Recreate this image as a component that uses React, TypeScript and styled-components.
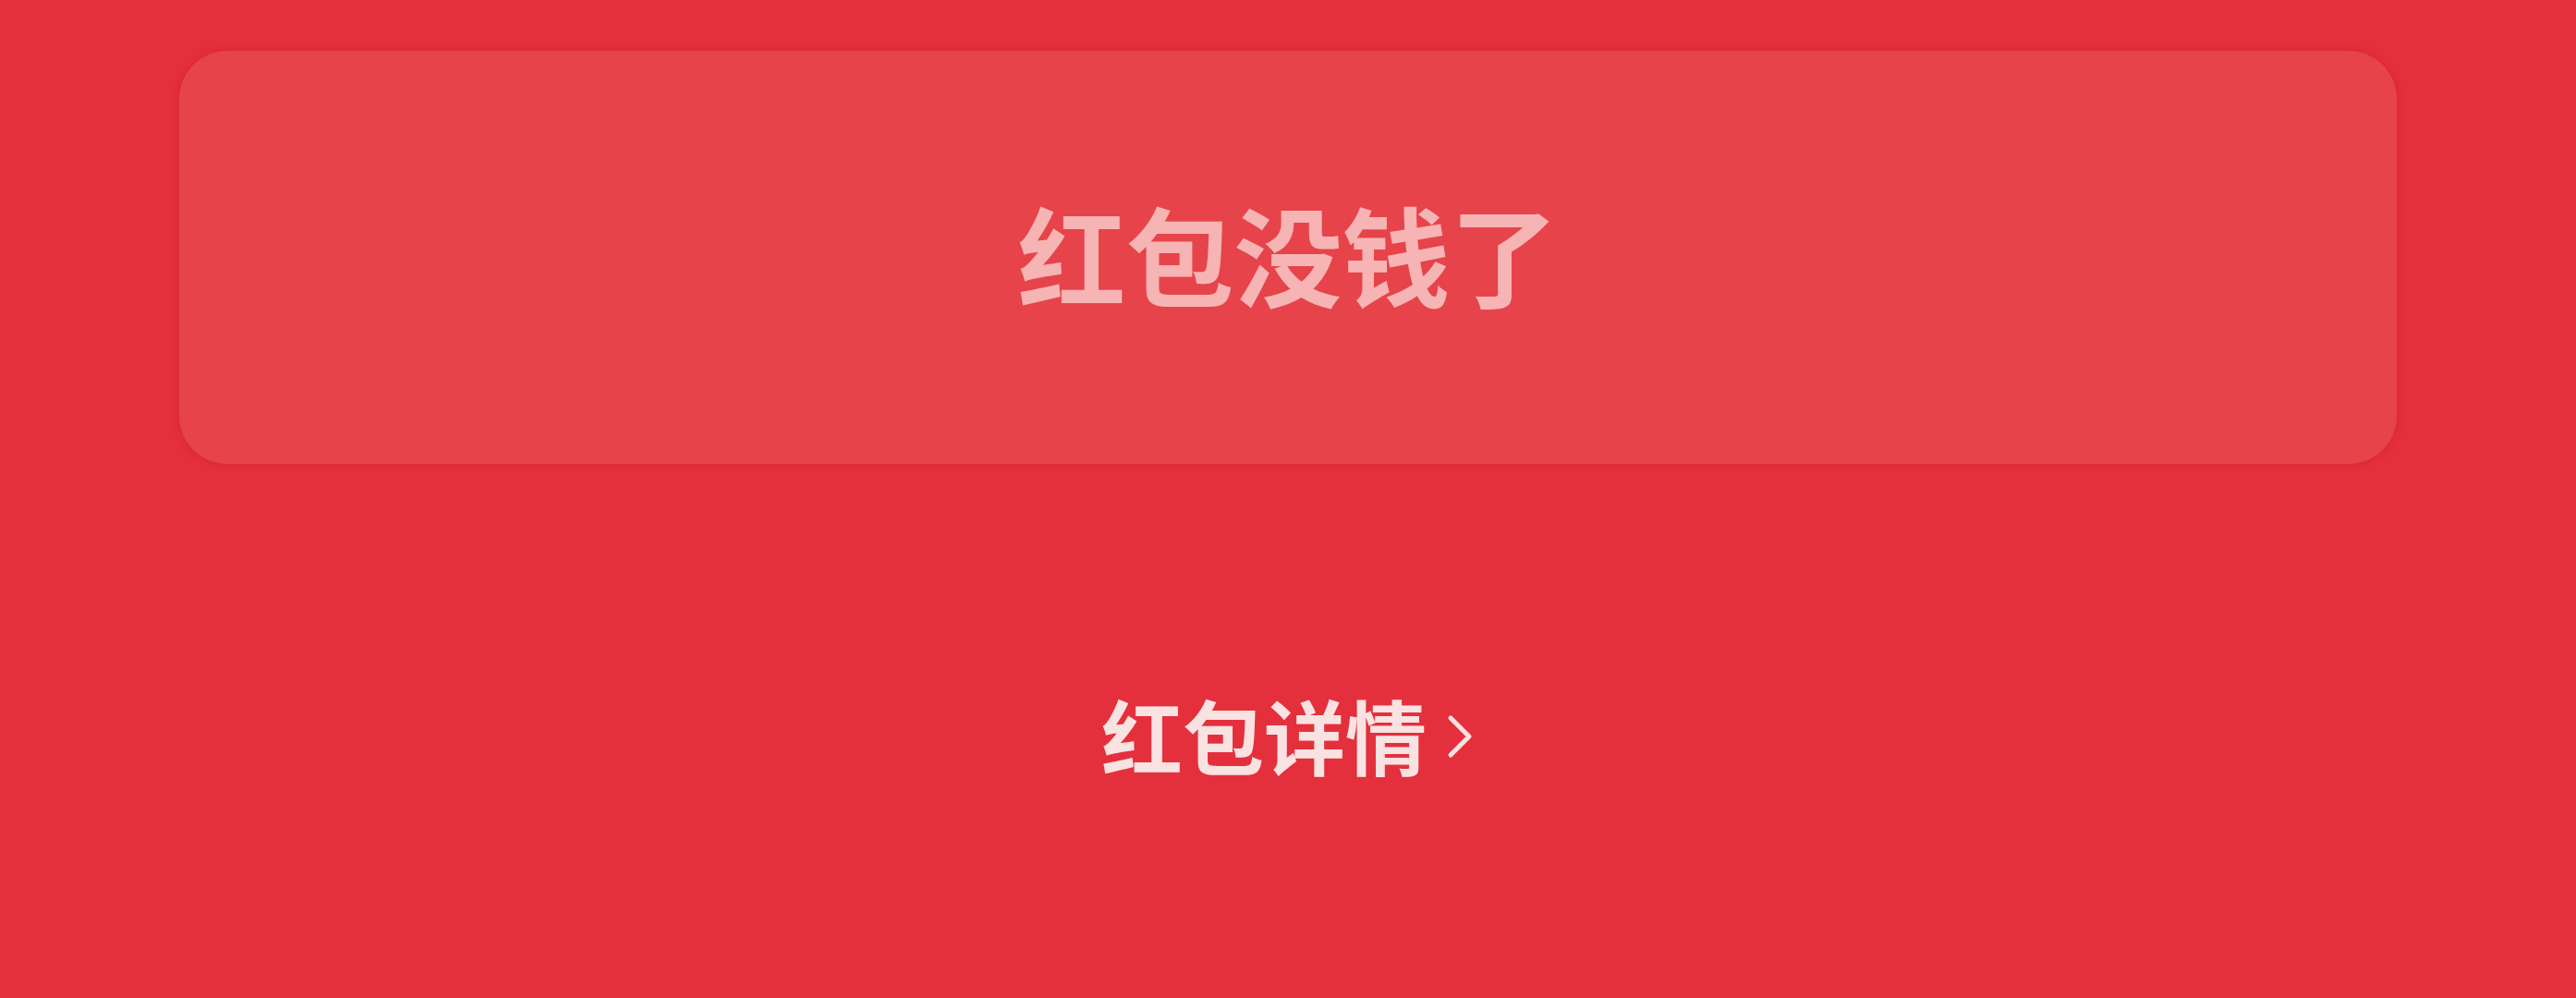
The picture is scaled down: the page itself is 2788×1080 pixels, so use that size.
import React from "react";
import styled, { createGlobalStyle } from "styled-components";

const GlobalStyle = createGlobalStyle`
  html, body {
    margin: 0;
    padding: 0;
    background: #e4303c;
  }
  body {
    font-family: "Noto Sans CJK SC", "Noto Sans", sans-serif;
  }
`;

const Page = styled.main`
  width: 2788px;
  height: 1080px;
  box-sizing: border-box;
  padding-top: 55px;
  display: flex;
  flex-direction: column;
  align-items: center;
  background: #e4303c;
  overflow: hidden;
`;

const Card = styled.section`
  width: 2400px;
  height: 447px;
  box-sizing: border-box;
  border-radius: 52px;
  background: #e6444a;
  box-shadow: 0 0 10px rgba(190, 20, 35, 0.35);
  display: flex;
  align-items: center;
  justify-content: center;
`;

const Title = styled.h1`
  margin: 0 0 10px;
  font-size: 117px;
  line-height: 1;
  font-weight: 700;
  color: #f6b4b4;
  letter-spacing: 0;
`;

const DetailLink = styled.a`
  margin-top: 248px;
  display: flex;
  align-items: center;
  gap: 20px;
  font-size: 88px;
  line-height: 1;
  font-weight: 700;
  color: #f9e2e2;
  text-decoration: none;
  cursor: pointer;
`;

const Chevron = styled.svg`
  width: 32px;
  height: 52px;
  flex: none;
  margin-top: 6px;
`;

export default function App() {
  return (
    <>
      <GlobalStyle />
      <Page>
        <Card>
          <Title>红包没钱了</Title>
        </Card>
        <DetailLink>
          <span>红包详情</span>
          <Chevron viewBox="0 0 32 52" fill="none">
            <polyline
              points="6,6 26,26 6,46"
              stroke="#f9e2e2"
              strokeWidth="5"
              strokeLinecap="round"
              strokeLinejoin="round"
            />
          </Chevron>
        </DetailLink>
      </Page>
    </>
  );
}
